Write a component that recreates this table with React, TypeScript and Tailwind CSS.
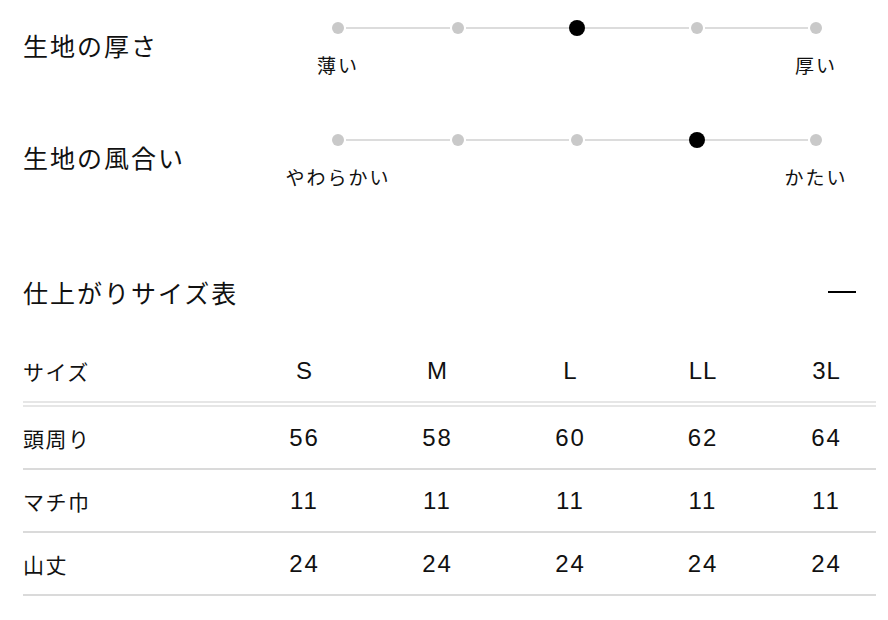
import React from "react";

const jp = { fontFamily: '"Noto Sans CJK JP", "Noto Sans", sans-serif' };
const num = { fontFamily: '"Liberation Sans", Arial, "Noto Sans CJK JP", sans-serif' };

function Slider({ active }: { active: number }) {
  const items: React.ReactNode[] = [];
  for (let i = 0; i < 5; i++) {
    if (i > 0) items.push(<div key={"l" + i} className="flex-1 h-[2px] bg-[#dcdcdc]" />);
    items.push(
      <div key={"d" + i} className="w-[16px] h-[16px] flex items-center justify-center">
        {i === active ? (
          <div className="w-[16px] h-[16px] rounded-full bg-black" />
        ) : (
          <div className="w-[12px] h-[12px] rounded-full bg-[#c9c9c9] ring-2 ring-white" />
        )}
      </div>
    );
  }
  return <div className="flex items-center h-[16px]">{items}</div>;
}

function Block({ title, left, right, active, className }: { title: string; left: string; right: string; active: number; className: string }) {
  return (
    <div className={"flex " + className}>
      <div className="w-[307px] mt-[9px] text-[25px] leading-[32px] tracking-[2px] text-[#111]" style={jp}>
        {title}
      </div>
      <div className="w-[494px]">
        <Slider active={active} />
        <div className="mt-[16px] flex justify-between px-[8px] text-[19px] leading-[26px] tracking-[2px] text-[#111]" style={jp}>
          <div className="w-0 flex justify-center whitespace-nowrap">{left}</div>
          <div className="w-0 flex justify-center whitespace-nowrap">{right}</div>
        </div>
      </div>
    </div>
  );
}

const cols = "grid grid-cols-[215px_133px_133px_133px_132px_1fr] items-center";

function Row({ label, values, header }: { label: string; values: string[]; header?: boolean }) {
  return (
    <div
      className={
        cols +
        (header
          ? " h-[51px] pb-[15px] border-b-[6px] border-double border-[#e6e6e6]"
          : " h-[63px] border-b-2 border-[#dadada]")
      }
    >
      <div className="text-[21px] leading-[30px] tracking-[1.5px] text-[#111]" style={jp}>
        {label}
      </div>
      {values.map((v, i) => (
        <div
          key={i}
          className={
            "text-center text-[24px] leading-[30px] text-[#111] " +
            (header ? "tracking-[1px]" : "tracking-[2px]") +
            (i === 4 ? " pl-[8px]" : "")
          }
          style={num}
        >
          {v}
        </div>
      ))}
    </div>
  );
}

export default function App() {
  return (
    <div className="w-[888px] h-[620px] bg-white pl-[23px] overflow-hidden">
      <Block className="mt-[20px]" title="生地の厚さ" left="薄い" right="厚い" active={2} />
      <Block className="mt-[54px]" title="生地の風合い" left="やわらかい" right="かたい" active={3} />

      <div className="mt-[86px] w-[853px] flex items-center justify-between h-[32px]">
        <div className="text-[25px] leading-[32px] tracking-[2px] text-[#111]" style={jp}>
          仕上がりサイズ表
        </div>
        <div className="w-[28px] h-[2.5px] bg-black mr-[20px]" />
      </div>

      <div className="mt-[48px] w-[853px]">
        <Row header label="サイズ" values={["S", "M", "L", "LL", "3L"]} />
        <Row label="頭周り" values={["56", "58", "60", "62", "64"]} />
        <Row label="マチ巾" values={["11", "11", "11", "11", "11"]} />
        <Row label="山丈" values={["24", "24", "24", "24", "24"]} />
      </div>
    </div>
  );
}
